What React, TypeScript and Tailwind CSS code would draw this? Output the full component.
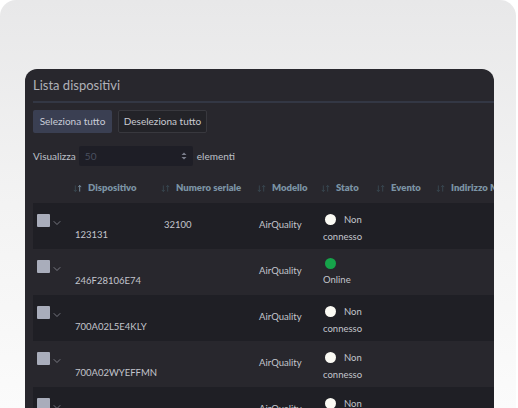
import { ChevronDown } from "lucide-react";

type Row = { id: string; serial: string; model: string; online: boolean };

const rows: Row[] = [
  { id: "123131", serial: "32100", model: "AirQuality", online: false },
  { id: "246F28106E74", serial: "", model: "AirQuality", online: true },
  { id: "700A02L5E4KLY", serial: "", model: "AirQuality", online: false },
  { id: "700A02WYEFFMN", serial: "", model: "AirQuality", online: false },
  { id: "700A02XXXXXXX", serial: "", model: "AirQuality", online: false },
];

const cols = [
  { label: "Dispositivo", w: "w-[88px]", up: true },
  { label: "Numero seriale", w: "w-[96px]", up: false },
  { label: "Modello", w: "w-[64px]", up: false },
  { label: "Stato", w: "w-[55px]", up: false },
  { label: "Evento", w: "w-[60px]", up: false },
  { label: "Indirizzo MAC", w: "w-[120px]", up: false },
];

function SortIcon({ up }: { up: boolean }) {
  return (
    <svg width="9" height="7" viewBox="0 0 10 8" className="shrink-0">
      <path d="M2.5 0.5v7M0.8 5.6l1.7 1.9 1.7-1.9" stroke="#3a4954" strokeWidth="1" fill="none" />
      <path d="M7.5 7.5v-7M5.8 2.4l1.7-1.9 1.7 1.9" stroke={up ? "#7f97a8" : "#3a4954"} strokeWidth="1" fill="none" />
    </svg>
  );
}

export default function App() {
  return (
    <div className="h-[408px] w-[518px] overflow-hidden bg-white font-['Lato',sans-serif]">
      <div className="h-full w-[516px] rounded-t-[16px] bg-gradient-to-b from-[#e8e8e9] via-[#f3f3f3] to-[#fbfbfb] pt-[69px] pl-[25px]">
        <div className="h-full w-[469px] overflow-hidden rounded-t-[12px] bg-[#28272d] pl-[8px]">
          <div className="flex h-[32px] items-center pt-[2px] text-[13px] text-[#b0b1b8]">Lista dispositivi</div>
          <div className="h-[2px] bg-[#333744]" />
          <div className="mt-[7px] flex gap-[6px]">
            <button className="h-[23px] w-[79px] rounded-[2px] bg-[#3a3f52] text-[10px] text-[#c9ccd8]">Seleziona tutto</button>
            <button className="h-[23px] w-[89px] rounded-[2px] border border-[#38383e] bg-[#232328] text-[10px] text-[#c9cad2]">Deseleziona tutto</button>
          </div>
          <div className="mt-[13px] flex items-center gap-[3px] text-[10px] text-[#bfc1c9]">
            <span>Visualizza</span>
            <div className="flex h-[20px] w-[114px] items-center justify-between rounded-[2px] bg-[#1e1e26] px-[6px]">
              <span className="text-[#4a5060]">50</span>
              <svg width="6" height="8" viewBox="0 0 6 8">
                <path d="M0.5 3L3 0.5 5.5 3ZM0.5 5L3 7.5 5.5 5Z" fill="#7b7f8c" />
              </svg>
            </div>
            <span className="ml-[1px]">elementi</span>
          </div>
          <div className="mt-[10px] flex h-[24px] w-[600px] items-center text-[9.5px] font-extrabold text-[#7b93a4]">
            <div className="w-[37px] shrink-0" />
            {cols.map((c) => (
              <div key={c.label} className={`${c.w} flex shrink-0 items-center gap-[6px] whitespace-nowrap pl-[3px]`}>
                <SortIcon up={c.up} />
                <span>{c.label}</span>
              </div>
            ))}
          </div>
          <div className="mt-[3px] w-[600px]">
            {rows.map((r, i) => (
              <div
                key={r.id}
                className={`flex h-[46px] text-[9.5px] text-[#c3c5cc] ${i % 2 === 0 ? "bg-[#1f1f25]" : "bg-[#28272d]"}`}
              >
                <div className="flex w-[37px] shrink-0 items-start pt-[11px] pl-[4px]">
                  <div className="h-[13px] w-[13px] rounded-[1px] bg-[#a9adbb]" />
                  <ChevronDown size={12} strokeWidth={1.3} className="mt-[3px] ml-[1px] text-[#a0a3ad]" />
                </div>
                <div className="w-[88px] shrink-0 pt-[25px] pl-[5px]">{r.id}</div>
                <div className="flex w-[96px] shrink-0 items-center pl-[6px] pb-[2px]">{r.serial}</div>
                <div className="flex w-[64px] shrink-0 items-center pl-[5px] pb-[2px]">{r.model}</div>
                <div className="w-[120px] shrink-0 pl-[5px] pt-[8px] leading-[17px]">
                  {r.online ? (
                    <>
                      <div className="ml-[2px] mt-[1px] h-[11px] w-[11px] rounded-full bg-[#16a34a]" />
                      <div className="mt-[2px]">Online</div>
                    </>
                  ) : (
                    <>
                      <div className="flex items-center">
                        <span className="ml-[2px] h-[11px] w-[11px] rounded-full bg-[#fbfaf4]" />
                        <span className="ml-[8px]">Non</span>
                      </div>
                      <div>connesso</div>
                    </>
                  )}
                </div>
              </div>
            ))}
          </div>
        </div>
      </div>
    </div>
  );
}
